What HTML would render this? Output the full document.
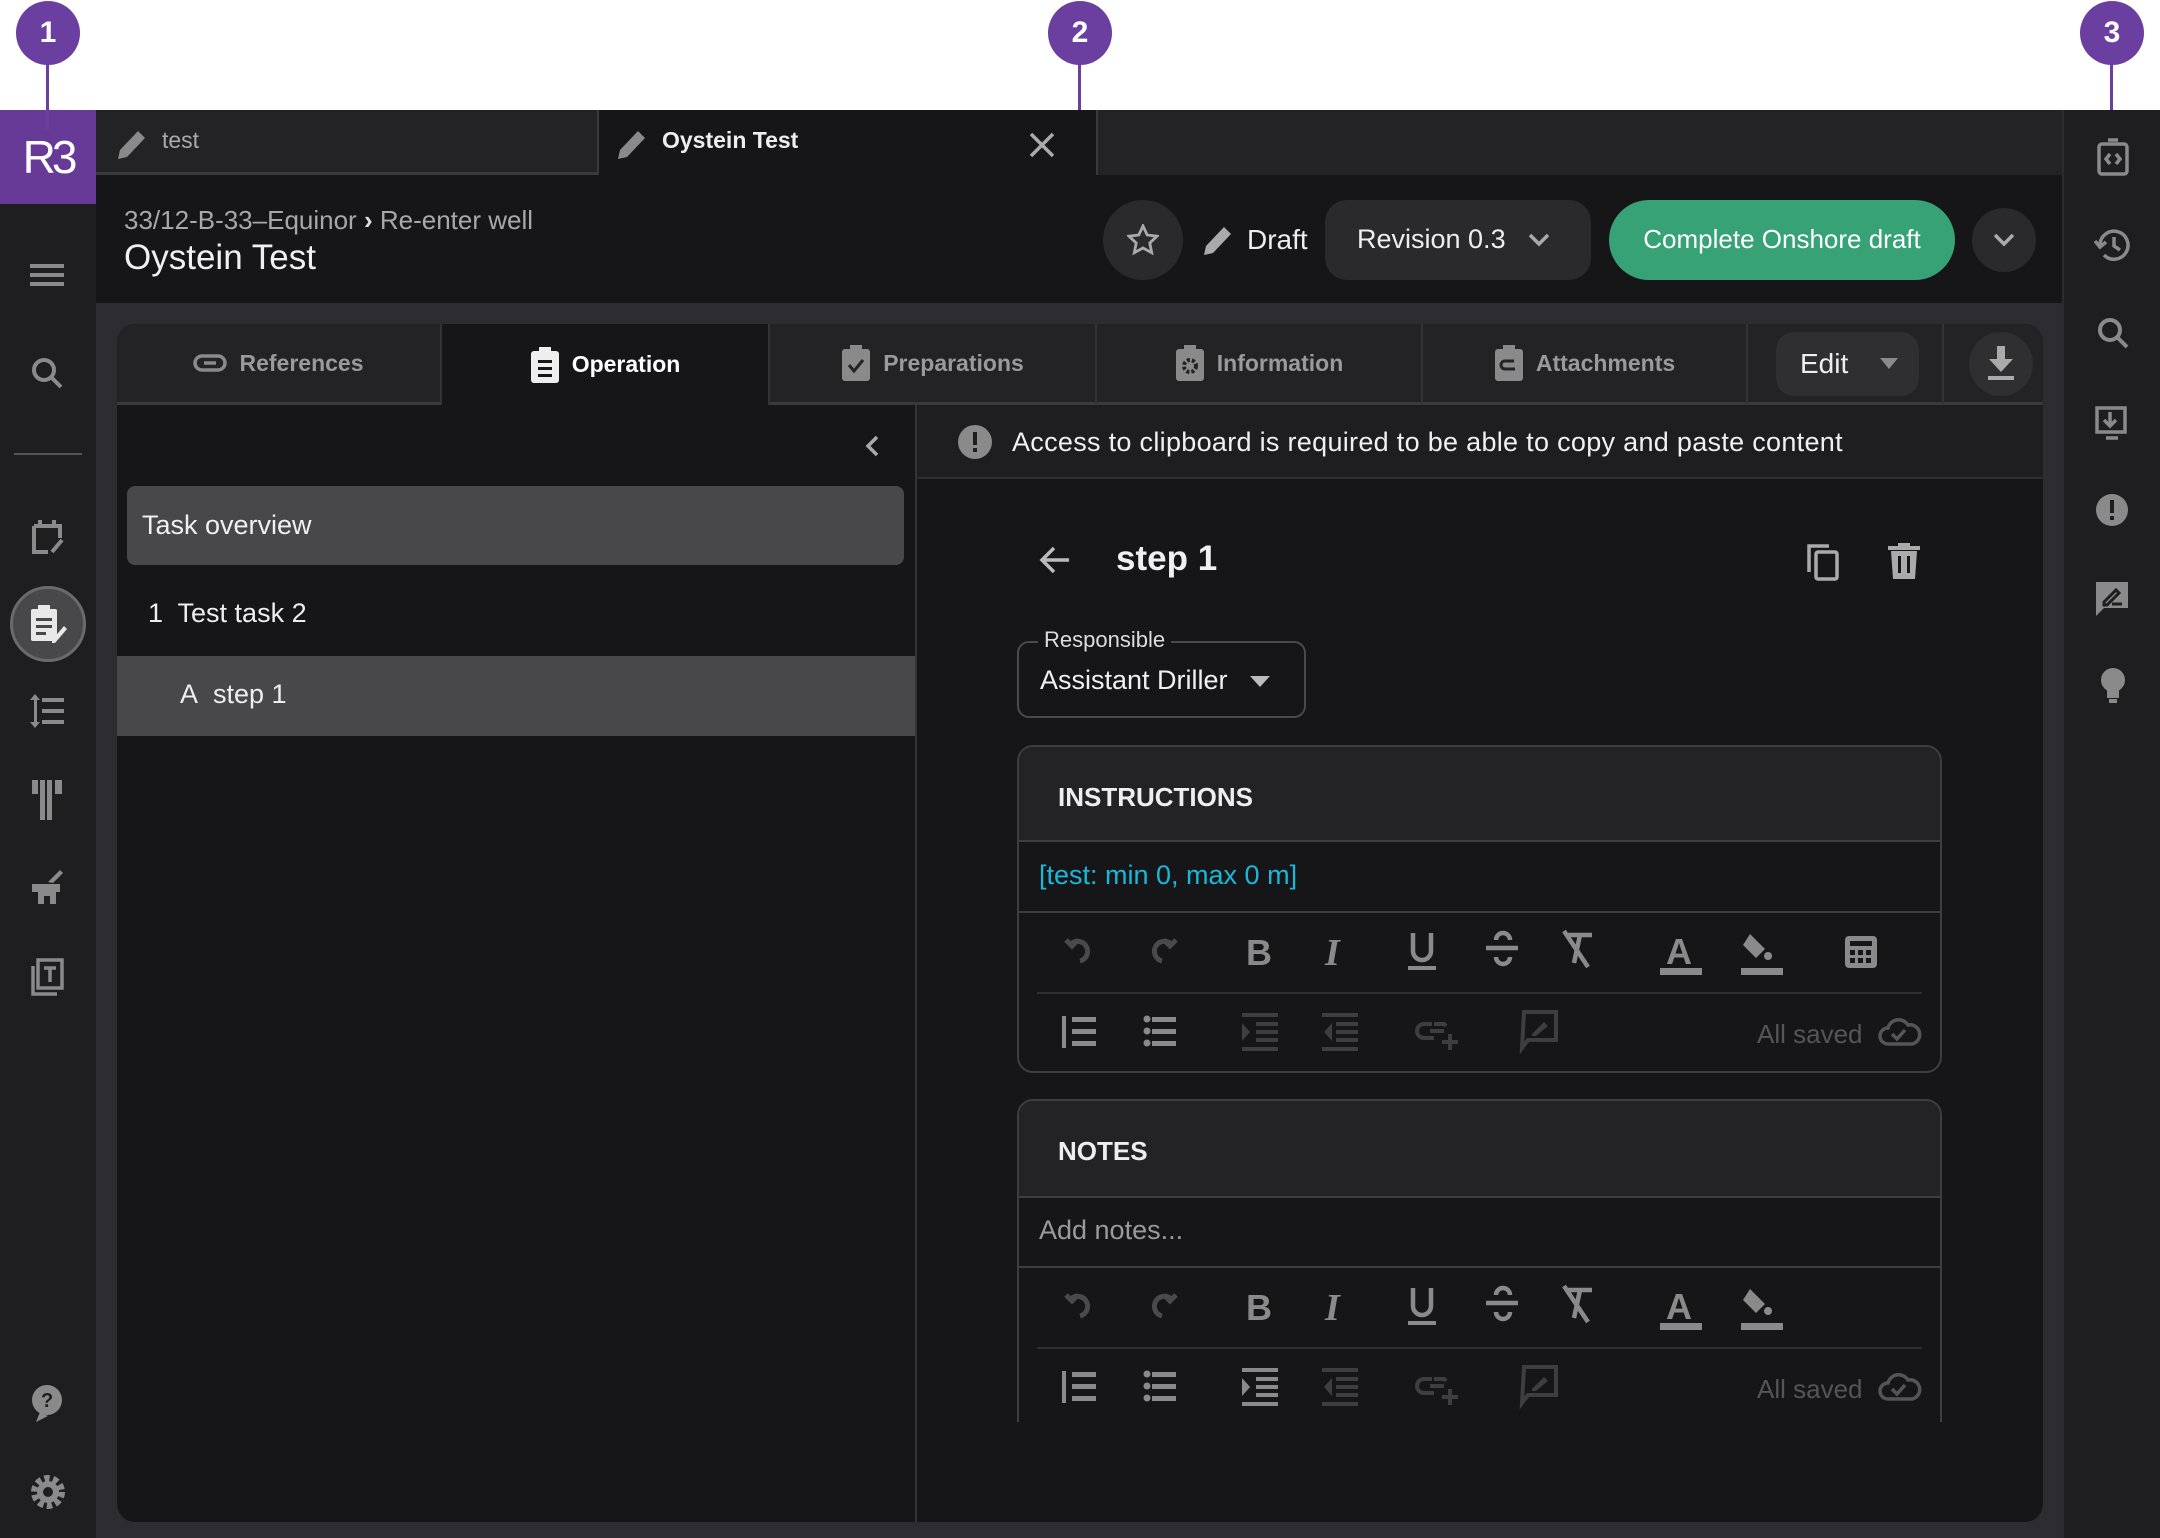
<!DOCTYPE html>
<html><head><meta charset="utf-8"><style>
*{margin:0;padding:0;box-sizing:border-box}
body{width:2160px;height:1538px;background:#fff;font-family:"Liberation Sans",sans-serif;position:relative;overflow:hidden;color:#e6e6e6}
.a{position:absolute}
.bub{position:absolute;width:64px;height:64px;border-radius:50%;background:#6a3fa0;color:#fff;font-weight:bold;font-size:30px;text-align:center;line-height:64px;top:1px}
.stem{position:absolute;width:3px;background:#6a3fa0;top:60px;height:62px}
svg.i{position:absolute}
.tab{position:absolute;top:324px;height:81px;background:#232326;border-right:2px solid #333;border-bottom:3px solid #3a3a3d;color:#9a9a9a;font-weight:bold;font-size:23px;display:flex;align-items:center;justify-content:center;gap:12px}
</style></head><body>
<div class="bub" style="left:16px">1</div><div class="stem" style="left:46px"></div>
<div class="bub" style="left:1048px">2</div><div class="stem" style="left:1078px"></div>
<div class="bub" style="left:2080px">3</div><div class="stem" style="left:2110px"></div>

<div class="a" style="left:0;top:110px;width:96px;height:1428px;background:#1e1e21"></div>
<div class="a" style="left:0;top:110px;width:96px;height:94px;background:#683a98;color:#fff;font-size:46px;text-align:center;line-height:94px;letter-spacing:-4px">R3</div>
<div class="stem" style="left:46px;top:60px;height:70px"></div>
<svg class="i" style="left:30px;top:262px" width="36" height="26"><rect y="2" width="34" height="4" fill="#8a8a8a"/><rect y="11" width="34" height="4" fill="#8a8a8a"/><rect y="20" width="34" height="4" fill="#8a8a8a"/></svg>
<svg class="i" style="left:30px;top:356px" width="36" height="36" fill="none" stroke="#8a8a8a" stroke-width="4"><circle cx="14" cy="14" r="10"/><path d="M21 21l10 10"/></svg>
<div class="a" style="left:14px;top:453px;width:68px;height:2px;background:#555"></div>
<svg class="i" style="left:30px;top:518px" width="36" height="38" fill="none" stroke="#8a8a8a" stroke-width="4"><path d="M4 8h26v12M4 8v26h14M10 2v8M24 2v8M22 34l10-12"/></svg>
<div class="a" style="left:10px;top:586px;width:76px;height:76px;border-radius:50%;background:#48484a;border:3px solid #6a6a6a"></div>
<svg class="i" style="left:28px;top:604px" width="40" height="40"><rect x="3" y="5" width="26" height="32" rx="2" fill="#e8e8e8"/><rect x="10" y="1" width="12" height="7" fill="#e8e8e8"/><rect x="8" y="14" width="16" height="3" fill="#48484a"/><rect x="8" y="21" width="16" height="3" fill="#48484a"/><rect x="8" y="28" width="10" height="3" fill="#48484a"/><path d="M24 36l12-14 3 3-12 14h-3z" fill="#e8e8e8"/></svg>
<svg class="i" style="left:30px;top:694px" width="36" height="34" fill="#8a8a8a"><rect x="12" y="4" width="22" height="4"/><rect x="12" y="15" width="22" height="4"/><rect x="12" y="26" width="22" height="4"/><rect x="4" y="4" width="3" height="26"/><path d="M0 6l5-6 5 6zM0 28l5 6 5-6z"/></svg>
<svg class="i" style="left:32px;top:780px" width="32" height="40" fill="#8a8a8a"><rect x="0" y="0" width="6" height="14"/><rect x="8" y="0" width="5" height="40"/><rect x="15" y="0" width="5" height="40"/><rect x="23" y="0" width="7" height="14"/></svg>
<svg class="i" style="left:30px;top:868px" width="36" height="36" fill="#8a8a8a"><path d="M2 16h28v8h-4v12h-6v-8h-6v8H8V24H2z"/><path d="M18 14l12-12 3 3-10 10z"/></svg>
<svg class="i" style="left:30px;top:956px" width="36" height="40" fill="none" stroke="#8a8a8a" stroke-width="3.5"><rect x="8" y="4" width="24" height="28"/><path d="M3 10v28h24"/><path d="M14 12h12M20 12v14"/></svg>
<svg class="i" style="left:30px;top:1384px" width="36" height="38" fill="#8a8a8a"><circle cx="17" cy="16" r="15"/><path d="M10 28l-4 10 12-6z"/><text x="11" y="23" font-size="20" font-weight="bold" fill="#1e1e21" font-family="Liberation Sans">?</text></svg>
<svg class="i" style="left:30px;top:1474px" width="36" height="36"><circle cx="18" cy="18" r="13" fill="none" stroke="#8a8a8a" stroke-width="8" stroke-dasharray="5 3.2"/><circle cx="18" cy="18" r="11" fill="#8a8a8a"/><circle cx="18" cy="18" r="5" fill="#1e1e21"/></svg>

<div class="a" style="left:2062px;top:110px;width:98px;height:1428px;background:#1e1e21;border-left:2px solid #2c2c2f"></div>
<svg class="i" style="left:2096px;top:138px" width="34" height="40" fill="none" stroke="#8a8a8a" stroke-width="3.5"><rect x="3" y="6" width="28" height="30" rx="3"/><path d="M12 2h10M14 16l-4 5 4 5M20 16l4 5-4 5"/></svg>
<svg class="i" style="left:2094px;top:227px" width="38" height="36" fill="none" stroke="#8a8a8a" stroke-width="3.5"><path d="M6 18a14 14 0 1 1 4 10"/><path d="M1 14l5 6 6-5" /><path d="M20 10v9l6 4"/></svg>
<svg class="i" style="left:2096px;top:316px" width="36" height="36" fill="none" stroke="#8a8a8a" stroke-width="4"><circle cx="14" cy="14" r="10"/><path d="M21 21l10 10"/></svg>
<svg class="i" style="left:2094px;top:404px" width="38" height="38" fill="none" stroke="#8a8a8a" stroke-width="3.5"><path d="M3 4h28v24H3zM12 34h12"/><path d="M16 8v14M10 16l6 6 6-6" /></svg>
<svg class="i" style="left:2094px;top:492px" width="38" height="38"><circle cx="18" cy="18" r="16" fill="#8a8a8a"/><rect x="16" y="8" width="4" height="13" fill="#1e1e21"/><rect x="16" y="24" width="4" height="4" fill="#1e1e21"/></svg>
<svg class="i" style="left:2094px;top:580px" width="38" height="38"><path d="M2 2h32v26H10l-8 8z" fill="#8a8a8a"/><path d="M10 22l12-12 3 3-12 12h-3zM18 24h10" stroke="#1e1e21" stroke-width="3" fill="none"/></svg>
<svg class="i" style="left:2098px;top:666px" width="30" height="40" fill="#8a8a8a"><circle cx="15" cy="14" r="12"/><rect x="9" y="24" width="12" height="8"/><rect x="11" y="33" width="8" height="4"/></svg>

<div class="a" style="left:96px;top:110px;width:1966px;height:65px;background:#232326"></div>
<div class="a" style="left:96px;top:110px;width:503px;height:65px;background:#232326;border-right:2px solid #3a3a3d;border-bottom:3px solid #3a3a3d;color:#aaa;font-size:23px;line-height:60px;padding-left:66px">test</div>
<svg class="i" style="left:116px;top:127px" width="34" height="34"><path d="M2 32l2-9 18-19 7 7-18 19z" fill="#8a8a8a"/></svg>
<div class="a" style="left:599px;top:110px;width:499px;height:65px;background:#161618;border-right:2px solid #3a3a3d;color:#eee;font-weight:bold;font-size:23px;line-height:60px;padding-left:63px">Oystein Test</div>
<svg class="i" style="left:616px;top:127px" width="34" height="34"><path d="M2 32l2-9 18-19 7 7-18 19z" fill="#8a8a8a"/></svg>
<svg class="i" style="left:1028px;top:131px" width="28" height="28" stroke="#aaa" stroke-width="3.5"><path d="M3 3l22 22M25 3L3 25"/></svg>

<div class="a" style="left:96px;top:175px;width:1966px;height:128px;background:#161618"></div>
<div class="a" style="left:124px;top:205px;font-size:26px;color:#a8a8a8">33/12-B-33–Equinor <b style="color:#ddd">›</b> Re-enter well</div>
<div class="a" style="left:124px;top:238px;font-size:35px;color:#f0f0f0">Oystein Test</div>
<div class="a" style="left:1103px;top:200px;width:80px;height:80px;border-radius:50%;background:#2a2a2d"></div>
<svg class="i" style="left:1127px;top:224px" width="32" height="32" fill="none" stroke="#aaa" stroke-width="2.8"><path d="M16 2l4.2 9 9.8 1.2-7.2 6.8 1.9 9.7L16 24l-8.7 4.7 1.9-9.7L2 12.2l9.8-1.2z"/></svg>
<svg class="i" style="left:1202px;top:223px" width="34" height="34"><path d="M2 32l2-9 18-19 7 7-18 19z" fill="#aaa"/></svg>
<div class="a" style="left:1247px;top:224px;font-size:28px;color:#eee">Draft</div>
<div class="a" style="left:1325px;top:200px;width:266px;height:80px;border-radius:22px;background:#2a2a2d;font-size:27px;color:#eee;line-height:78px;padding-left:32px">Revision 0.3</div>
<svg class="i" style="left:1528px;top:232px" width="22" height="16" fill="none" stroke="#aaa" stroke-width="3.5"><path d="M2 3l9 9 9-9"/></svg>
<div class="a" style="left:1609px;top:200px;width:346px;height:80px;border-radius:40px;background:#36a275;font-size:26px;color:#fff;line-height:78px;text-align:center">Complete Onshore draft</div>
<div class="a" style="left:1972px;top:208px;width:64px;height:64px;border-radius:50%;background:#2a2a2d"></div>
<svg class="i" style="left:1993px;top:232px" width="22" height="16" fill="none" stroke="#aaa" stroke-width="3.5"><path d="M2 3l9 9 9-9"/></svg>

<div class="a" style="left:96px;top:303px;width:1966px;height:1235px;background:#2d2c31"></div>
<div class="a" style="left:117px;top:324px;width:1926px;height:1198px;background:#161618;border-radius:18px;overflow:hidden"></div>
<div class="tab" style="left:117px;width:325px;border-top-left-radius:18px"><svg width="34" height="20" fill="none" stroke="#8a8a8a" stroke-width="3.5"><rect x="2" y="3" width="30" height="14" rx="7"/><path d="M11 10h12"/></svg>References</div>
<div class="tab" style="left:442px;width:328px;background:#161618;border-bottom:none;color:#fff"><svg width="30" height="36"><rect x="1" y="4" width="28" height="32" rx="3" fill="#eee"/><rect x="9" y="0" width="12" height="7" fill="#eee"/><rect x="8" y="13" width="14" height="3" fill="#161618"/><rect x="8" y="20" width="14" height="3" fill="#161618"/><rect x="8" y="27" width="14" height="3" fill="#161618"/></svg>Operation</div>
<div class="tab" style="left:770px;width:327px"><svg width="30" height="36"><rect x="1" y="4" width="28" height="32" rx="3" fill="#8a8a8a"/><rect x="9" y="0" width="12" height="7" fill="#8a8a8a"/><path d="M8 20l5 6 9-11" stroke="#232326" stroke-width="3" fill="none"/></svg>Preparations</div>
<div class="tab" style="left:1097px;width:326px"><svg width="30" height="36"><rect x="1" y="4" width="28" height="32" rx="3" fill="#8a8a8a"/><rect x="9" y="0" width="12" height="7" fill="#8a8a8a"/><circle cx="15" cy="21" r="6" fill="none" stroke="#232326" stroke-width="4" stroke-dasharray="3 2"/></svg>Information</div>
<div class="tab" style="left:1423px;width:325px"><svg width="30" height="36"><rect x="1" y="4" width="28" height="32" rx="3" fill="#8a8a8a"/><rect x="9" y="0" width="12" height="7" fill="#8a8a8a"/><path d="M20 16h-9a4 4 0 0 0 0 8h10" stroke="#232326" stroke-width="3" fill="none"/></svg>Attachments</div>
<div class="tab" style="left:1748px;width:196px"></div>
<div class="a" style="left:1776px;top:332px;width:143px;height:64px;border-radius:18px;background:#2f2f32;color:#eee;font-size:28px;line-height:64px;padding-left:24px">Edit</div>
<svg class="i" style="left:1880px;top:358px" width="18" height="12"><path d="M0 0h18L9 11z" fill="#8a8a8a"/></svg>
<div class="tab" style="left:1944px;width:99px;border-right:none;border-top-right-radius:18px"></div>
<div class="a" style="left:1969px;top:332px;width:64px;height:64px;border-radius:50%;background:#2f2f32"></div>
<svg class="i" style="left:1986px;top:346px" width="30" height="36" fill="#aaa"><rect x="11" y="0" width="8" height="14"/><path d="M3 13h24L15 26z"/><rect x="2" y="30" width="26" height="4"/></svg>

<div class="a" style="left:915px;top:405px;width:2px;height:1117px;background:#333"></div>
<svg class="i" style="left:864px;top:434px" width="16" height="24" fill="none" stroke="#aaa" stroke-width="3.5"><path d="M13 3L4 12l9 9"/></svg>
<div class="a" style="left:127px;top:486px;width:777px;height:79px;background:#48484a;border-radius:8px;font-size:27px;color:#f0f0f0;line-height:79px;padding-left:15px">Task overview</div>
<div class="a" style="left:148px;top:598px;font-size:27px;color:#eee">1&nbsp; Test task 2</div>
<div class="a" style="left:117px;top:656px;width:798px;height:80px;background:#48484a"></div>
<div class="a" style="left:180px;top:679px;font-size:27px;color:#eee">A&nbsp; step 1</div>

<div class="a" style="left:917px;top:405px;width:1126px;height:74px;background:#1e1e21;border-bottom:2px solid #2e2e31"></div>
<svg class="i" style="left:957px;top:424px" width="36" height="36"><circle cx="18" cy="18" r="17" fill="#8a8a8a"/><rect x="16" y="8" width="4" height="13" fill="#1e1e21"/><rect x="16" y="24" width="4" height="4" fill="#1e1e21"/></svg>
<div class="a" style="left:1012px;top:427px;font-size:27px;color:#f0f0f0;letter-spacing:0.3px">Access to clipboard is required to be able to copy and paste content</div>

<svg class="i" style="left:1039px;top:545px" width="32" height="30" fill="none" stroke="#bbb" stroke-width="3.5"><path d="M30 15H4M15 3L3 15l12 12"/></svg>
<div class="a" style="left:1116px;top:539px;font-size:35px;color:#f0f0f0;font-weight:bold">step 1</div>
<svg class="i" style="left:1805px;top:542px" width="36" height="40" fill="none" stroke="#aaa" stroke-width="3.5"><path d="M4 30V4h20"/><rect x="11" y="10" width="21" height="27" rx="2"/></svg>
<svg class="i" style="left:1888px;top:543px" width="32" height="36" fill="#aaa"><rect x="0" y="3" width="32" height="4"/><rect x="10" y="0" width="12" height="4"/><path d="M3 8h26l-2 28H5z"/><rect x="10" y="13" width="3" height="17" fill="#161618"/><rect x="19" y="13" width="3" height="17" fill="#161618"/></svg>

<div class="a" style="left:1017px;top:641px;width:289px;height:77px;border:2px solid #4a4a4d;border-radius:12px"></div>
<div class="a" style="left:1038px;top:627px;background:#161618;padding:0 6px;font-size:22px;color:#ddd">Responsible</div>
<div class="a" style="left:1040px;top:665px;font-size:27px;color:#f0f0f0">Assistant Driller</div>
<svg class="i" style="left:1250px;top:676px" width="20" height="12"><path d="M0 0h20L10 11z" fill="#bbb"/></svg>

<div class="a" style="left:1017px;top:745px;width:925px;height:328px;border:2px solid #3e3e41;border-radius:16px;overflow:hidden">
 <div style="height:95px;background:#232326;border-bottom:2px solid #3e3e41;font-size:26px;font-weight:bold;color:#eee;padding:35px 0 0 39px">INSTRUCTIONS</div>
 <div style="height:71px;border-bottom:2px solid #3e3e41;font-size:27px;color:#1ab8d8;padding:18px 0 0 20px">[test: min 0, max 0 m]</div>
</div>
<div class="a" style="left:1037px;top:992px;width:885px;height:2px;background:#2f2f32"></div>

<div class="a" style="left:1017px;top:1099px;width:925px;height:340px;border:2px solid #3e3e41;border-radius:16px;overflow:hidden">
 <div style="height:97px;background:#232326;border-bottom:2px solid #3e3e41;font-size:26px;font-weight:bold;color:#eee;padding:35px 0 0 39px">NOTES</div>
 <div style="height:70px;border-bottom:2px solid #3e3e41;font-size:27px;color:#9a9a9a;padding:17px 0 0 20px">Add notes...</div>
</div>
<div class="a" style="left:1037px;top:1347px;width:885px;height:2px;background:#2f2f32"></div>
<div class="a" style="left:1010px;top:1422px;width:940px;height:100px;background:#161618"></div>

<svg width="0" height="0" style="position:absolute">
<defs>
<g id="r1">
 <path d="M1072 943a10 10 0 1 1 8 18M1066 940l6 6 6-6" fill="none" stroke="#4a4a4d" stroke-width="5"/>
 <path d="M1170 943a10 10 0 1 0-8 18M1176 940l-6 6-6-6" fill="none" stroke="#4a4a4d" stroke-width="5"/>
 <text x="1246" y="965" font-size="36" font-weight="bold" fill="#8a8a8a" font-family="Liberation Sans">B</text>
 <text x="1325" y="965" font-size="38" font-weight="bold" font-style="italic" fill="#8a8a8a" font-family="Liberation Serif">I</text>
 <path d="M1413 933v18a9 9 0 0 0 18 0v-18" fill="none" stroke="#8a8a8a" stroke-width="4.5"/><rect x="1408" y="966" width="28" height="4" fill="#8a8a8a"/>
 <path d="M1486 948h32M1496 940a7 7 0 0 1 14 0M1496 957a7 7 0 0 0 14 0" fill="none" stroke="#8a8a8a" stroke-width="4.5"/>
 <path d="M1566 935h26M1580 935l-6 28M1564 931l24 36" fill="none" stroke="#8a8a8a" stroke-width="4.5"/>
 <text x="1666" y="964" font-size="36" font-weight="bold" fill="#8a8a8a" font-family="Liberation Sans">A</text><rect x="1660" y="968" width="42" height="7" fill="#8a8a8a"/>
 <path d="M1750 934l15 15-9 9-13-13zM1768 952a4 4 0 1 0 .1 0" fill="#8a8a8a"/><rect x="1741" y="968" width="42" height="7" fill="#8a8a8a"/>
</g>
<g id="r2">
 <g fill="#8a8a8a"><rect x="1072" y="1017" width="24" height="5"/><rect x="1072" y="1029" width="24" height="5"/><rect x="1072" y="1041" width="24" height="5"/><rect x="1062" y="1016" width="4" height="32"/></g>
 <g fill="#8a8a8a"><rect x="1152" y="1017" width="24" height="5"/><rect x="1152" y="1029" width="24" height="5"/><rect x="1152" y="1041" width="24" height="5"/><circle cx="1147" cy="1019" r="3.5"/><circle cx="1147" cy="1031" r="3.5"/><circle cx="1147" cy="1043" r="3.5"/></g>
 <g fill="#3e3e41"><rect x="1242" y="1013" width="36" height="4"/><rect x="1256" y="1022" width="22" height="4"/><rect x="1256" y="1030" width="22" height="4"/><rect x="1256" y="1038" width="22" height="4"/><rect x="1242" y="1047" width="36" height="4"/><path d="M1242 1023l8 9-8 9z"/></g>
 <g fill="#3e3e41"><rect x="1322" y="1013" width="36" height="4"/><rect x="1336" y="1022" width="22" height="4"/><rect x="1336" y="1030" width="22" height="4"/><rect x="1336" y="1038" width="22" height="4"/><rect x="1322" y="1047" width="36" height="4"/><path d="M1332 1023l-8 9 8 9z"/></g>
 <path d="M1432 1024h-8a7 7 0 0 0 0 14h10M1434 1024h10a7 7 0 0 1 2 2M1430 1031h14M1450 1034v16M1442 1042h16" fill="none" stroke="#3e3e41" stroke-width="4"/>
 <path d="M1524 1012h32v28h-28l-6 8z" fill="none" stroke="#3e3e41" stroke-width="4"/><path d="M1532 1034l12-12 4 4-12 10h-4z" fill="#3e3e41"/>
 <text x="1757" y="1043" font-size="26" fill="#555" font-family="Liberation Sans">All saved</text>
 <path d="M1888 1044a8 8 0 0 1 0-16 11 11 0 0 1 20-3 8 8 0 0 1 4 19z M1892 1034l5 5 8-9" fill="none" stroke="#555" stroke-width="3.5"/>
</g>
</defs></svg>
<svg class="a" style="left:0;top:0" width="2160" height="1538">
 <use href="#r1"/>
 <rect x="1845" y="936" width="32" height="32" rx="4" fill="#8a8a8a"/><rect x="1850" y="941" width="22" height="5" fill="#161618"/><g fill="#161618"><rect x="1850" y="950" width="5" height="5"/><rect x="1858" y="950" width="5" height="5"/><rect x="1866" y="950" width="5" height="5"/><rect x="1850" y="958" width="5" height="5"/><rect x="1858" y="958" width="5" height="5"/><rect x="1866" y="958" width="5" height="5"/></g>
 <use href="#r2"/>
 <use href="#r1" transform="translate(0,355)"/>
 <use href="#r2" transform="translate(0,355)"/>
 <g fill="#8a8a8a" transform="translate(0,355)"><rect x="1242" y="1013" width="36" height="4"/><rect x="1256" y="1022" width="22" height="4"/><rect x="1256" y="1030" width="22" height="4"/><rect x="1256" y="1038" width="22" height="4"/><rect x="1242" y="1047" width="36" height="4"/><path d="M1242 1023l8 9-8 9z"/></g>
</svg>
</body></html>
